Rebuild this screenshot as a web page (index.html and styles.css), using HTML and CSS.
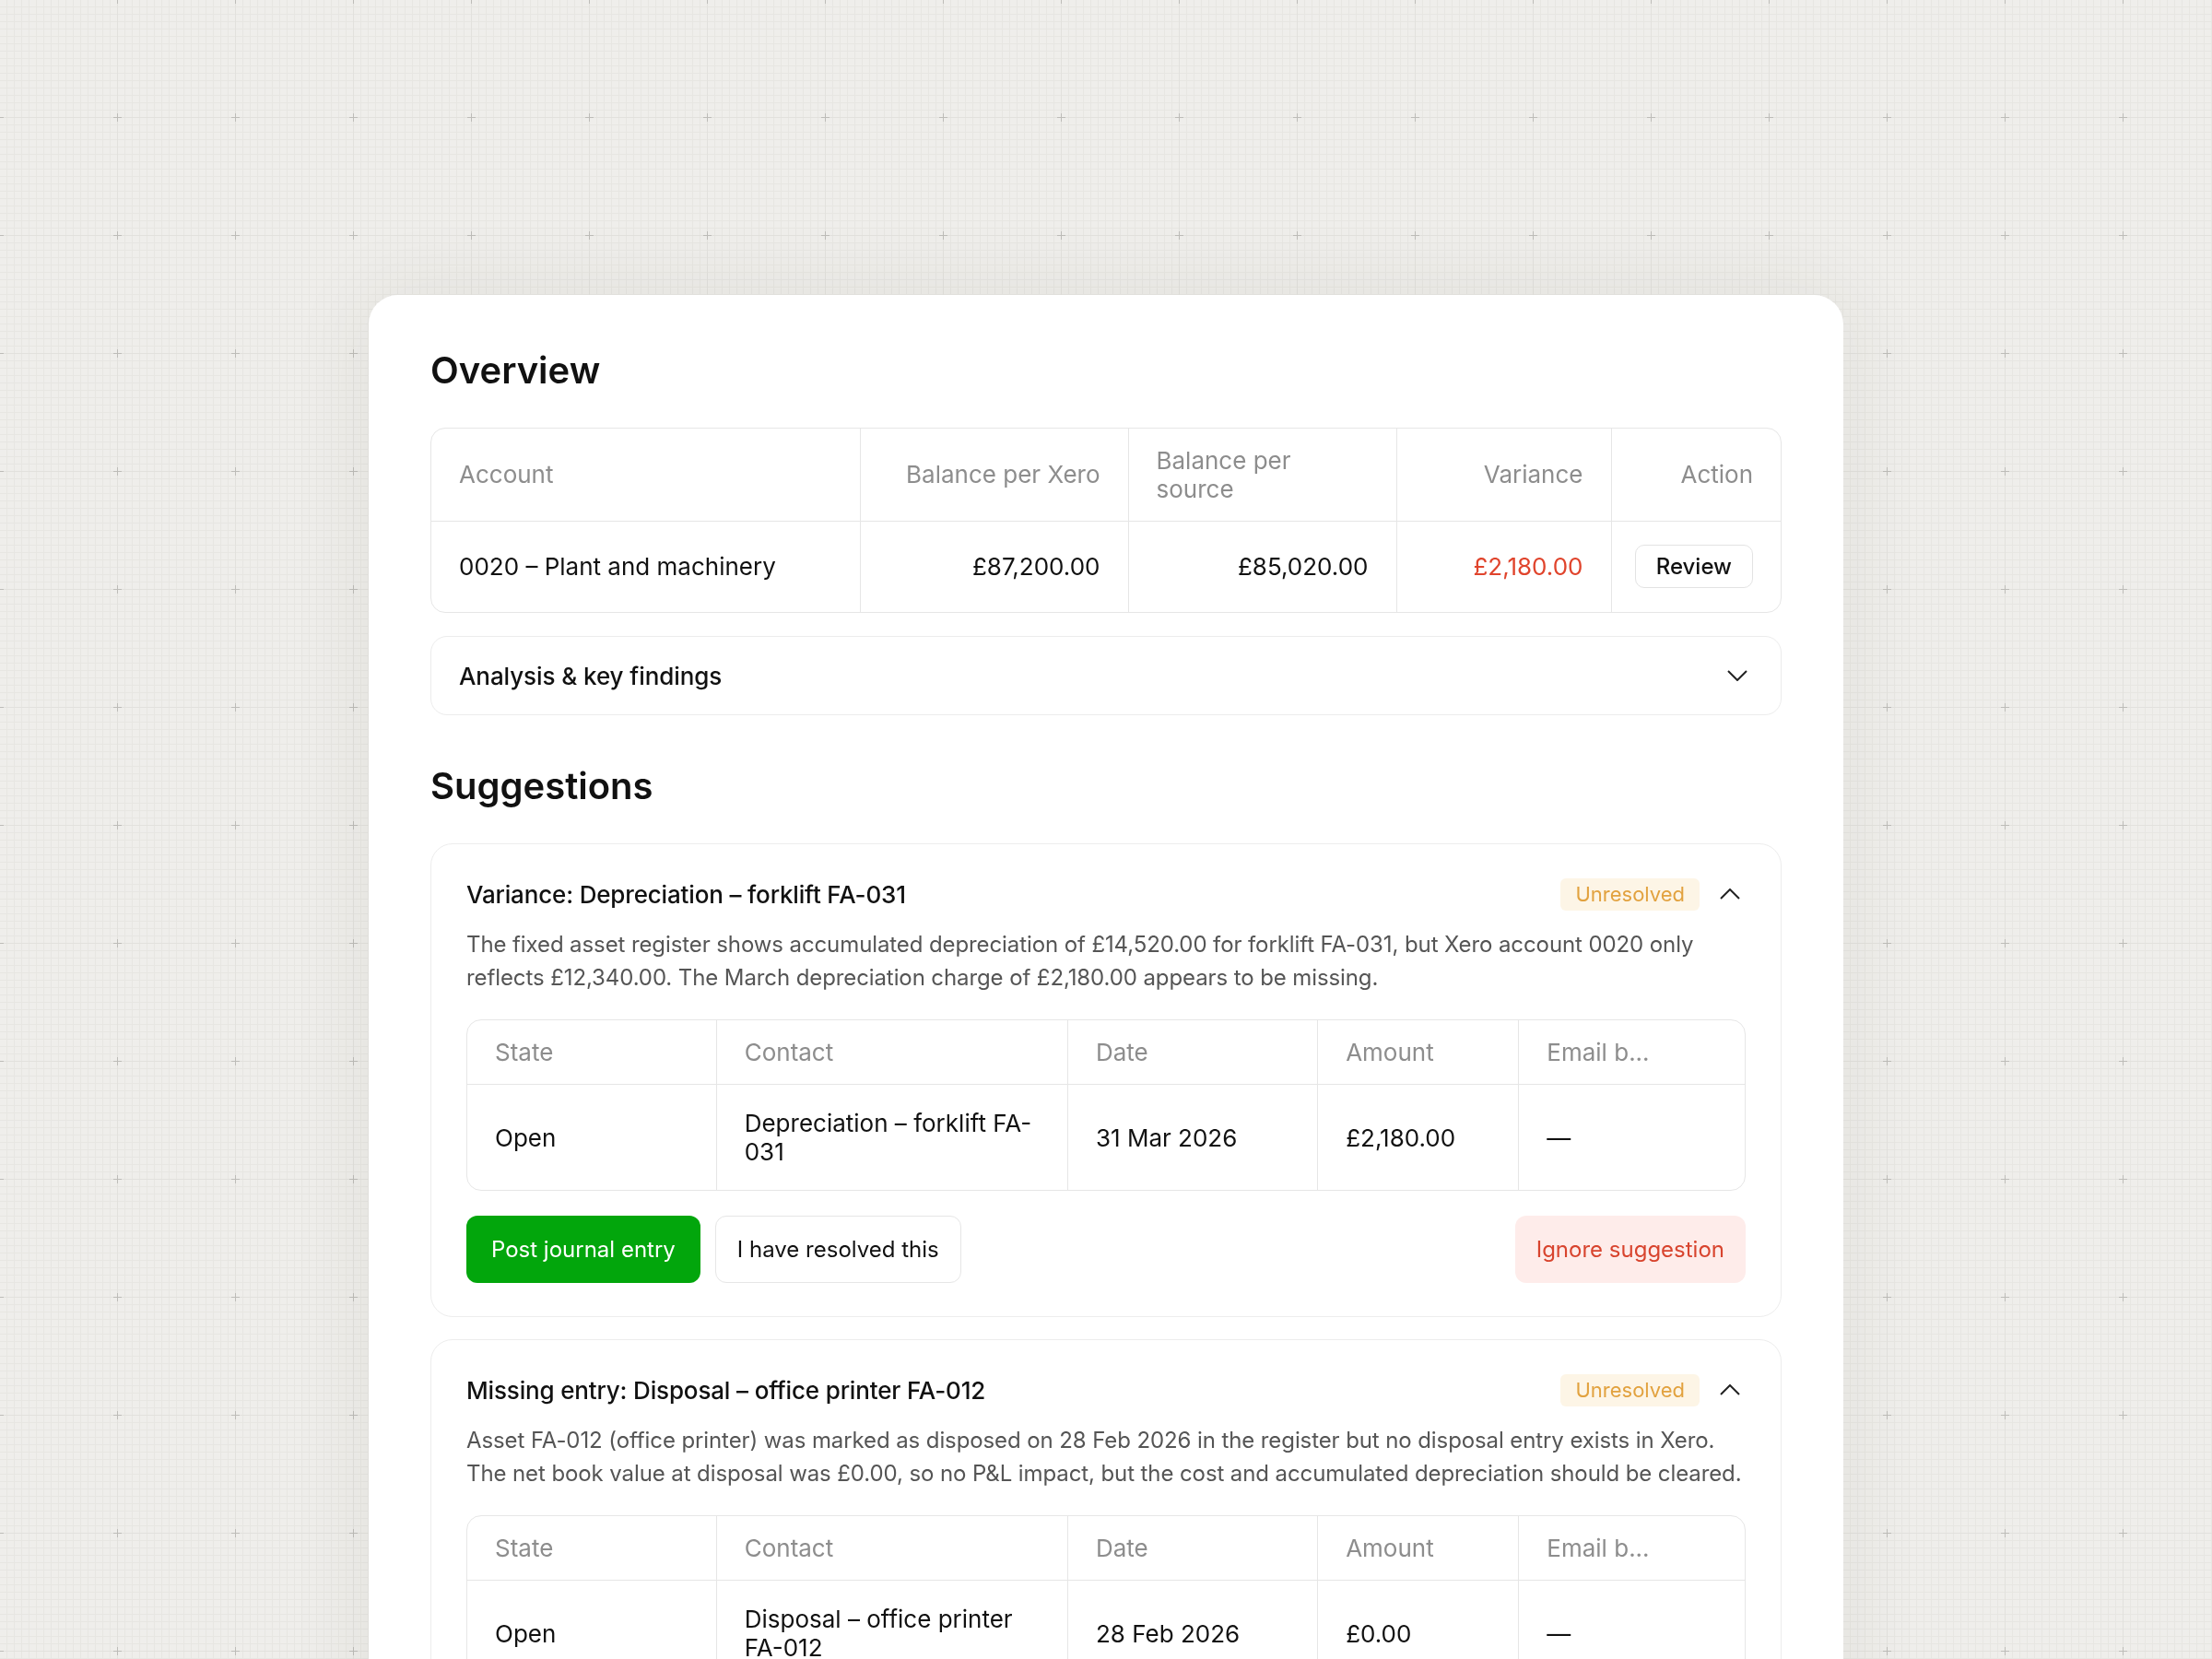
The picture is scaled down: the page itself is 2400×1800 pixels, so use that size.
FILE: index.html
```html
<!DOCTYPE html>
<html>
<head>
    <title>Reconciliation - Plant and machinery</title>
    <link rel="stylesheet" href="styles.css">
</head>
<body>
    <!-- drafting grid behind the panel -->
    <svg class="backdrop" width="2400" height="1800" aria-hidden="true">
        <defs>
            <pattern id="fine-grid" width="8" height="8" patternUnits="userSpaceOnUse">
                <rect x="7" y="0" width="1" height="8" fill="#e7e6e2"/>
                <rect x="0" y="7" width="8" height="1" fill="#e7e6e2"/>
            </pattern>
            <pattern id="major-grid" x="-64" y="-64" width="128" height="128" patternUnits="userSpaceOnUse">
                <rect x="63" y="0" width="1" height="128" fill="#e2e1dd"/>
                <rect x="0" y="63" width="128" height="1" fill="#e2e1dd"/>
                <rect x="59" y="63" width="9" height="1" fill="#bdbcb8"/>
                <rect x="63" y="59" width="1" height="9" fill="#bdbcb8"/>
            </pattern>
        </defs>
        <rect width="100%" height="100%" fill="url(#fine-grid)"/>
        <rect width="100%" height="100%" fill="url(#major-grid)"/>
    </svg>

    <div class="page">
        <main class="panel">
            <h2 class="section-title">Overview</h2>

            <div class="grid-box">
                <table class="grid overview">
                    <colgroup>
                        <col style="width: 465px">
                        <col style="width: 291px">
                        <col style="width: 291px">
                        <col style="width: 233px">
                        <col style="width: 184px">
                    </colgroup>
                    <thead>
                        <tr>
                            <th>Account</th>
                            <th class="num">Balance per Xero</th>
                            <th>Balance per<br>source</th>
                            <th class="num">Variance</th>
                            <th class="num">Action</th>
                        </tr>
                    </thead>
                    <tbody>
                        <tr>
                            <td>0020 – Plant and machinery</td>
                            <td class="num">£87,200.00</td>
                            <td class="num">£85,020.00</td>
                            <td class="num negative">£2,180.00</td>
                            <td class="num action-cell"><button class="btn-review">Review</button></td>
                        </tr>
                    </tbody>
                </table>
            </div>

            <div class="accordion">
                <span>Analysis &amp; key findings</span>
                <svg class="chevron" width="22" height="12" viewBox="0 0 22 12">
                    <polyline points="1,1 11,11 21,1"/>
                </svg>
            </div>

            <h2 class="section-title spaced">Suggestions</h2>

            <div class="suggestion">
                <div class="suggestion-head">
                    <span class="suggestion-title">Variance: Depreciation – forklift FA-031</span>
                    <span class="badge">Unresolved</span>
                    <svg class="chevron up" width="22" height="12" viewBox="0 0 22 12">
                        <polyline points="1,11 11,1 21,11"/>
                    </svg>
                </div>
                <p class="suggestion-text">The fixed asset register shows accumulated depreciation of £14,520.00 for forklift FA-031, but Xero account 0020 only reflects £12,340.00. The March depreciation charge of £2,180.00 appears to be missing.</p>

                <div class="grid-box">
                    <table class="grid entries">
                        <colgroup>
                            <col style="width: 270px">
                            <col style="width: 381px">
                            <col style="width: 271px">
                            <col style="width: 218px">
                            <col style="width: 245px">
                        </colgroup>
                        <thead>
                            <tr>
                                <th>State</th>
                                <th>Contact</th>
                                <th>Date</th>
                                <th>Amount</th>
                                <th>Email b...</th>
                            </tr>
                        </thead>
                        <tbody>
                            <tr>
                                <td>Open</td>
                                <td>Depreciation – forklift FA-<wbr>031</td>
                                <td>31 Mar 2026</td>
                                <td>£2,180.00</td>
                                <td>—</td>
                            </tr>
                        </tbody>
                    </table>
                </div>

                <div class="actions">
                    <button class="btn btn-primary">Post journal entry</button>
                    <button class="btn btn-outline">I have resolved this</button>
                    <button class="btn btn-danger">Ignore suggestion</button>
                </div>
            </div>

            <div class="suggestion">
                <div class="suggestion-head">
                    <span class="suggestion-title">Missing entry: Disposal – office printer FA-012</span>
                    <span class="badge">Unresolved</span>
                    <svg class="chevron up" width="22" height="12" viewBox="0 0 22 12">
                        <polyline points="1,11 11,1 21,11"/>
                    </svg>
                </div>
                <p class="suggestion-text">Asset FA-012 (office printer) was marked as disposed on 28 Feb 2026 in the register but no disposal entry exists in Xero. The net book value at disposal was £0.00, so no P&amp;L impact, but the cost and accumulated depreciation should be cleared.</p>

                <div class="grid-box">
                    <table class="grid entries">
                        <colgroup>
                            <col style="width: 270px">
                            <col style="width: 381px">
                            <col style="width: 271px">
                            <col style="width: 218px">
                            <col style="width: 245px">
                        </colgroup>
                        <thead>
                            <tr>
                                <th>State</th>
                                <th>Contact</th>
                                <th>Date</th>
                                <th>Amount</th>
                                <th>Email b...</th>
                            </tr>
                        </thead>
                        <tbody>
                            <tr>
                                <td>Open</td>
                                <td>Disposal – office printer FA-012</td>
                                <td>28 Feb 2026</td>
                                <td>£0.00</td>
                                <td>—</td>
                            </tr>
                        </tbody>
                    </table>
                </div>

                <div class="actions">
                    <button class="btn btn-primary">Post journal entry</button>
                    <button class="btn btn-outline">I have resolved this</button>
                    <button class="btn btn-danger">Ignore suggestion</button>
                </div>
            </div>
        </main>
    </div>
</body>
</html>
```

FILE: styles.css
```css
* {
    box-sizing: border-box;
}

html, body {
    margin: 0;
    height: 100%;
    overflow: hidden;
}

body {
    font-family: Inter, "Noto Sans", sans-serif;
    background-color: #efeeeb;
    color: #111;
}

.backdrop {
    position: fixed;
    top: 0;
    left: 0;
    z-index: 0;
}

.page {
    position: relative;
    z-index: 1;
    padding-top: 320px;
}

.panel {
    width: 1600px;
    min-height: 1700px;
    margin: 0 auto;
    padding: 58px 67px 80px;
    background-color: #fff;
    border-radius: 32px 32px 0 0;
    box-shadow: 0 0 90px rgba(70, 60, 40, 0.08);
}

.section-title {
    margin: 0 0 38px;
    font-size: 40px;
    line-height: 48px;
    font-weight: 600;
}

.section-title.spaced {
    margin-top: 53px;
    margin-bottom: 38px;
}

/* tables */

.grid-box {
    border: 1px solid #e6e6e6;
    border-radius: 16px;
    overflow: hidden;
}

.grid {
    width: 100%;
    border-collapse: collapse;
    table-layout: fixed;
    font-size: 26px;
    line-height: 31px;
}

.grid th,
.grid td {
    padding: 0 30px;
    border-left: 1px solid #e6e6e6;
    text-align: left;
    vertical-align: middle;
}

.grid th:first-child,
.grid td:first-child {
    border-left: none;
}

.grid thead tr {
    border-bottom: 1px solid #e6e6e6;
}

.grid th {
    font-weight: 400;
    color: #8d8d8d;
}

.grid .num {
    text-align: right;
}

.grid .negative {
    color: #e0442c;
}

.overview th {
    height: 100px;
}

.overview td {
    height: 99px;
}

.overview .action-cell {
    padding-left: 0;
}

.entries th {
    padding-top: 19px;
    padding-bottom: 19px;
}

.entries td {
    padding-top: 26px;
    padding-bottom: 26px;
}

.btn-review {
    height: 47px;
    padding: 0 22px;
    font-family: inherit;
    font-size: 24px;
    font-weight: 500;
    color: #111;
    background-color: #fff;
    border: 1px solid #e3e3e3;
    border-radius: 10px;
}

/* accordion */

.accordion {
    display: flex;
    align-items: center;
    justify-content: space-between;
    height: 86px;
    margin-top: 25px;
    padding: 0 36px 0 30px;
    border: 1px solid #ececec;
    border-radius: 18px;
    font-size: 26px;
    font-weight: 500;
    letter-spacing: -0.08px;
}

.chevron {
    fill: none;
    stroke: #222;
    stroke-width: 2;
}

/* suggestion cards */

.suggestion {
    margin-bottom: 24px;
    padding: 36px 38px;
    border: 1px solid #ededed;
    border-radius: 24px;
}

.suggestion-head {
    display: flex;
    align-items: center;
    height: 36px;
}

.suggestion-title {
    font-size: 26px;
    font-weight: 500;
    letter-spacing: -0.16px;
}

.badge {
    margin-left: auto;
    height: 35px;
    line-height: 35px;
    padding: 0 16px;
    font-size: 22px;
    color: #e2a23f;
    background-color: #fdf5e6;
    border-radius: 6px;
}

.chevron.up {
    margin-left: 22px;
    margin-right: 6px;
}

.suggestion-text {
    margin: 19px 0 27px;
    font-size: 24px;
    line-height: 36px;
    letter-spacing: -0.1px;
    color: #555;
}

.actions {
    display: flex;
    gap: 16px;
    margin-top: 27px;
}

.btn {
    height: 73px;
    padding: 0 26px;
    font-family: inherit;
    font-size: 24px;
    border: 1px solid transparent;
    border-radius: 12px;
    cursor: pointer;
}

.btn-primary {
    color: #fff;
    background-color: #02a60c;
}

.btn-outline {
    padding: 0 23px;
    color: #111;
    background-color: #fff;
    border-color: #e6e6e6;
}

.btn-danger {
    margin-left: auto;
    padding: 0 22px;
    color: #d8442e;
    background-color: #feecea;
}
```
